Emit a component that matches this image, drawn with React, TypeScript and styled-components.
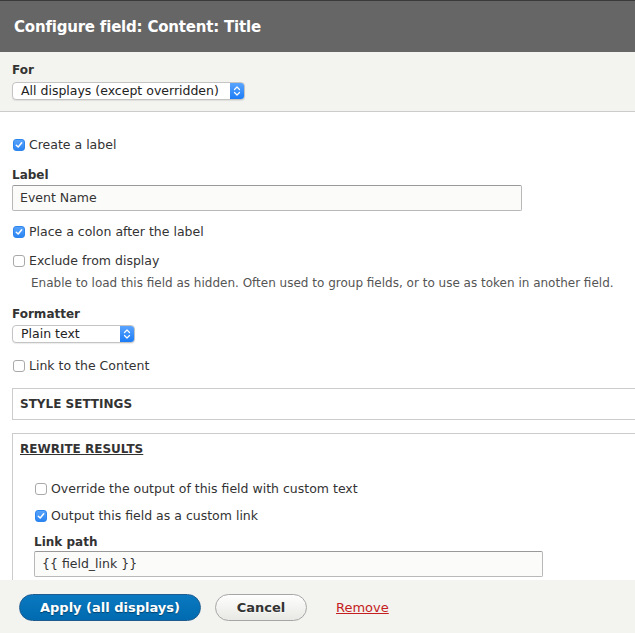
import React from "react";
import styled, { createGlobalStyle } from "styled-components";

const GlobalStyle = createGlobalStyle`
  html, body { margin: 0; padding: 0; }
  body {
    font-family: "DejaVu Sans", "Liberation Sans", sans-serif;
    color: #333;
    background: #fff;
  }
  * { box-sizing: border-box; }
`;

const Dialog = styled.div`
  width: 635px;
  height: 633px;
  display: flex;
  flex-direction: column;
  overflow: hidden;
`;

const Header = styled.div`
  height: 52px;
  flex: none;
  background: #666;
  border-top: 1px solid #3a3a3a;
  display: flex;
  align-items: center;
  padding: 0 14px;
`;

const Title = styled.h1`
  margin: 0;
  font-size: 15px;
  font-weight: bold;
  color: #fff;
  letter-spacing: -0.2px;
`;

const Scroll = styled.div`
  flex: 1;
  overflow: hidden;
  display: flex;
  flex-direction: column;
`;

const ForSection = styled.div`
  background: #f3f3ef;
  border-bottom: 1px solid #ccc;
  padding: 11px 12px 11px;
  display: flex;
  flex-direction: column;
  align-items: flex-start;
  gap: 4px;
  flex: none;
`;

const Body = styled.div`
  padding: 25px 0 0 12px;
  display: flex;
  flex-direction: column;
  align-items: stretch;
`;

const FieldLabel = styled.div`
  font-size: 12px;
  font-weight: bold;
  color: #333;
  line-height: 15px;
`;

const FormItem = styled.div<{ $mb?: number; $gap?: number }>`
  display: flex;
  flex-direction: column;
  align-items: flex-start;
  gap: ${(p) => p.$gap ?? 4}px;
  margin-bottom: ${(p) => p.$mb ?? 12}px;
`;

const SelectBox = styled.div<{ $w: number }>`
  width: ${(p) => p.$w}px;
  height: 18px;
  border: 1px solid #c4c4c4;
  border-radius: 4px;
  background: #fff;
  display: flex;
  align-items: stretch;
  overflow: hidden;
  box-shadow: 0 1px 1px rgba(0, 0, 0, 0.08);
`;

const SelectText = styled.span`
  flex: 1;
  font-size: 12.5px;
  line-height: 16px;
  padding-left: 8px;
  color: #222;
  white-space: nowrap;
`;

const Stepper = styled.span`
  width: 14px;
  background: linear-gradient(#5aa4ff, #1c7cf6);
  display: flex;
  align-items: center;
  justify-content: center;
`;

const CheckRow = styled.label<{ $mb?: number }>`
  display: flex;
  align-items: center;
  gap: 4px;
  font-size: 12.5px;
  line-height: 16px;
  color: #333;
  margin-bottom: ${(p) => p.$mb ?? 11}px;
`;

const Box = styled.span<{ $on: boolean }>`
  width: 12px;
  height: 12px;
  border-radius: 3px;
  flex: none;
  display: flex;
  align-items: center;
  justify-content: center;
  background: ${(p) => (p.$on ? "linear-gradient(#57a3fb, #2b84f2)" : "#fff")};
  border: 1px solid ${(p) => (p.$on ? "#2d86ee" : "#a9a9a9")};
  margin-left: 1px;
`;

const TextInput = styled.div<{ $w: number }>`
  width: ${(p) => p.$w}px;
  height: 26px;
  border: 1px solid #b8b8b8;
  border-top-color: #999;
  border-radius: 2px;
  background: #fbfbfa;
  font-size: 12.5px;
  line-height: 24px;
  padding-left: 7px;
  color: #333;
`;

const Description = styled.div`
  font-size: 12px;
  color: #555;
  padding-left: 19px;
  margin-top: -3px;
  margin-bottom: 17px;
  white-space: nowrap;
`;

const Fieldset = styled.div<{ $mb?: number }>`
  border: 1px solid #ccc;
  border-right: none;
  margin-right: -10px;
  margin-bottom: ${(p) => p.$mb ?? 0}px;
`;

const Legend = styled.div<{ $link?: boolean }>`
  font-size: 12px;
  font-weight: bold;
  text-transform: uppercase;
  color: #333;
  padding: 8px 7px 7px;
  line-height: 15px;
  span {
    text-decoration: ${(p) => (p.$link ? "underline" : "none")};
  }
`;

const FieldsetInner = styled.div`
  padding: 17px 0 0 21px;
  display: flex;
  flex-direction: column;
`;

const Footer = styled.div`
  height: 53px;
  flex: none;
  background: #f3f3ef;
  display: flex;
  align-items: center;
  padding: 2px 0 0 19px;
  gap: 14px;
`;

const Button = styled.button<{ $primary?: boolean; $w: number }>`
  width: ${(p) => p.$w}px;
  height: 27px;
  border-radius: 14px;
  font-family: "DejaVu Sans", sans-serif;
  font-weight: bold;
  font-size: 13px;
  padding: 0;
  cursor: pointer;
  color: ${(p) => (p.$primary ? "#fff" : "#333")};
  background: ${(p) =>
    p.$primary ? "linear-gradient(#0a78c0, #006bb0)" : "linear-gradient(#fefefe, #e8e8e4)"};
  border: 1px solid ${(p) => (p.$primary ? "#1e5c90" : "#a6a6a6")};
  text-shadow: ${(p) => (p.$primary ? "0 1px 1px rgba(0,0,0,0.4)" : "0 1px rgba(255,255,255,0.6)")};
`;

const RemoveLink = styled.a`
  color: #c41e1e;
  font-size: 13px;
  text-decoration: underline;
  margin-left: 15px;
`;

const Check = ({ on }: { on: boolean }) => (
  <Box $on={on}>
    {on && (
      <svg width="8" height="8" viewBox="0 0 8 8">
        <path d="M1.3 4.2 L3.2 6 L6.7 1.8" fill="none" stroke="#fff" strokeWidth="1.5" strokeLinecap="round" strokeLinejoin="round" />
      </svg>
    )}
  </Box>
);

const Select = ({ w, value }: { w: number; value: string }) => (
  <SelectBox $w={w}>
    <SelectText>{value}</SelectText>
    <Stepper>
      <svg width="8" height="12" viewBox="0 0 8 12">
        <path d="M1.5 4.5 L4 2 L6.5 4.5 M1.5 7.5 L4 10 L6.5 7.5" fill="none" stroke="#fff" strokeWidth="1.2" strokeLinecap="round" strokeLinejoin="round" />
      </svg>
    </Stepper>
  </SelectBox>
);

export default function App() {
  return (
    <>
      <GlobalStyle />
      <Dialog>
        <Header>
          <Title>Configure field: Content: Title</Title>
        </Header>
        <Scroll>
          <ForSection>
            <FieldLabel>For</FieldLabel>
            <Select w={233} value="All displays (except overridden)" />
          </ForSection>
          <Body>
            <CheckRow $mb={15}>
              <Check on />
              Create a label
            </CheckRow>
            <FormItem $mb={13} $gap={2}>
              <FieldLabel>Label</FieldLabel>
              <TextInput $w={510}>Event Name</TextInput>
            </FormItem>
            <CheckRow $mb={13}>
              <Check on />
              Place a colon after the label
            </CheckRow>
            <CheckRow $mb={10}>
              <Check on={false} />
              Exclude from display
            </CheckRow>
            <Description>
              Enable to load this field as hidden. Often used to group fields, or to use as token in another field.
            </Description>
            <FormItem $mb={15} $gap={3}>
              <FieldLabel>Formatter</FieldLabel>
              <Select w={123} value="Plain text" />
            </FormItem>
            <CheckRow $mb={14}>
              <Check on={false} />
              Link to the Content
            </CheckRow>
            <Fieldset $mb={13}>
              <Legend>
                <span>Style settings</span>
              </Legend>
            </Fieldset>
            <Fieldset>
              <Legend $link>
                <span>Rewrite results</span>
              </Legend>
              <FieldsetInner>
                <CheckRow $mb={11}>
                  <Check on={false} />
                  Override the output of this field with custom text
                </CheckRow>
                <CheckRow $mb={11}>
                  <Check on />
                  Output this field as a custom link
                </CheckRow>
                <FormItem $mb={12} $gap={1}>
                  <FieldLabel>Link path</FieldLabel>
                  <TextInput $w={509}>{"{{ field_link }}"}</TextInput>
                </FormItem>
              </FieldsetInner>
            </Fieldset>
          </Body>
        </Scroll>
        <Footer>
          <Button $primary $w={182}>Apply (all displays)</Button>
          <Button $w={92}>Cancel</Button>
          <RemoveLink href="#">Remove</RemoveLink>
        </Footer>
      </Dialog>
    </>
  );
}
